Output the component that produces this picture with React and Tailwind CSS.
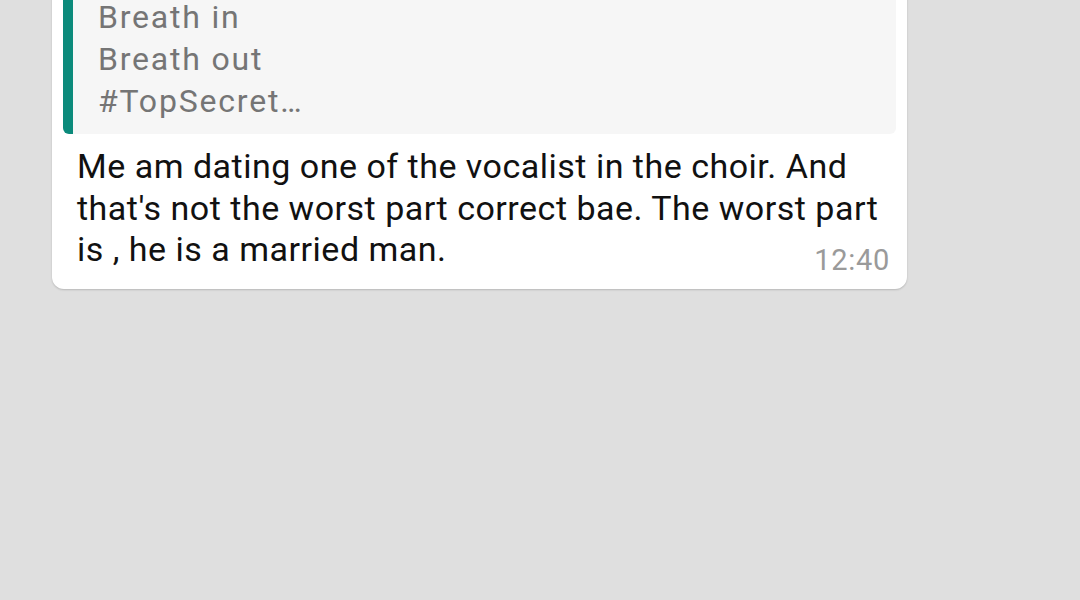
import React from 'react';

const App = () => {
  return (
    <div className="h-[600px] w-[1080px] overflow-hidden bg-[#dfdfdf] font-['Roboto',sans-serif]">
      <div className="ml-[52px] mt-[-23px] w-[855px] rounded-[12px] bg-white px-[11px] pt-[11px] pb-[13px] shadow-[0_1px_2px_rgba(0,0,0,0.18)]">
        {/* quoted message */}
        <div className="rounded-[6px] border-l-[10px] border-[#0b8a7b] bg-[#f6f6f6] pl-[25px] pt-[8px] pb-[12px] text-[32px] leading-[42px] tracking-[1.8px] text-[#757575]">
          <div>Breath in</div>
          <div>Breath out</div>
          <div>#TopSecret…</div>
        </div>

        <p className="mt-[12px] pl-[14px] pr-[8px] text-[34px] leading-[41.5px] tracking-[0.5px] text-[#111111]">
          Me am dating one of the vocalist in the choir. And that's not the worst part correct bae. The worst part is , he is a married man.
        </p>
        <div className="-mt-[27px] flex justify-end pr-[6px]">
          <span className="text-[29px] leading-[32px] tracking-[0.7px] text-[#9a9a9a]">12:40</span>
        </div>
      </div>
    </div>
  );
};

export default App;
